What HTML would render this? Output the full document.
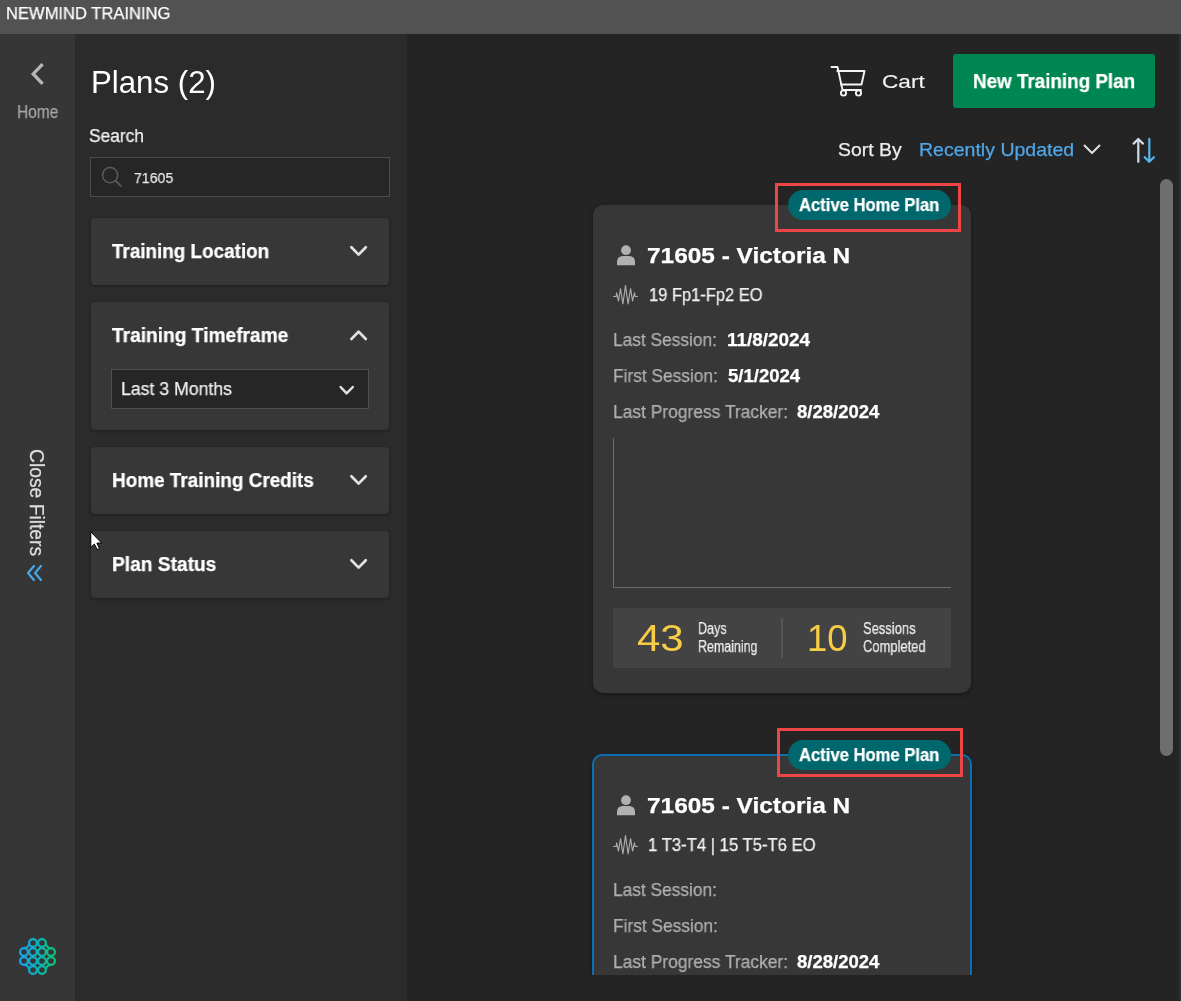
<!DOCTYPE html>
<html><head><meta charset="utf-8"><style>*{margin:0;padding:0;box-sizing:border-box}
html,body{width:1181px;height:1001px;overflow:hidden;background:#242424;font-family:"Liberation Sans",sans-serif;color:#fff}
.a{position:absolute}
.t{position:absolute;white-space:nowrap;line-height:1;will-change:transform;-webkit-text-stroke:.25px currentColor}
.acc{position:absolute;left:91px;width:298px;background:#373737;border-radius:4px;box-shadow:0 1px 3px rgba(0,0,0,.35)}
.card{position:absolute;background:#373737;border-radius:10px;box-shadow:0 2px 5px rgba(0,0,0,.35)}
</style></head><body>
<div class="a" style="left:0;top:0;width:1181px;height:34px;background:#525252"></div>
<div class="a" style="left:0;top:34px;width:75px;height:967px;background:#363636"></div>
<div class="a" style="left:75px;top:34px;width:332px;height:967px;background:#2b2b2b"></div>
<div class="t" id="title" style="left:5.62px;top:5px;font-size:17px;font-weight:400;color:#ffffff;transform:scaleX(0.9743);transform-origin:0 0;">NEWMIND TRAINING</div>
<svg class="a" style="left:28px;top:60px" width="20" height="28" viewBox="0 0 20 28"><path d="M14.6 4.2 L5.2 13.9 L14.6 23.8" fill="none" stroke="#b6b6b6" stroke-width="3.3" stroke-linecap="butt" stroke-linejoin="miter"/></svg>
<div class="t" style="left:46.3px;top:449px;font-size:19.3px;color:#dedede;transform-origin:0 0;transform:rotate(90deg)">Close Filters</div>
<svg class="a" style="left:24px;top:563px" width="22" height="20" viewBox="0 0 22 20"><path d="M10 3 L4 10 L10 17 M17 3 L11 10 L17 17" fill="none" stroke="#48a7e6" stroke-width="2.2" stroke-linecap="round" stroke-linejoin="round"/></svg>
<svg class="a" style="left:15px;top:934px" width="45" height="45" viewBox="0 0 45 45"><defs><linearGradient id="lg" x1="5" y1="22" x2="40" y2="22" gradientUnits="userSpaceOnUse"><stop offset="0" stop-color="#18a4f2"/><stop offset="0.5" stop-color="#0db3b9"/><stop offset="1" stop-color="#0cc375"/></linearGradient></defs><g fill="none" stroke="url(#lg)" stroke-width="2.2"><circle cx="18" cy="9" r="3.9"/><circle cx="27" cy="9" r="3.9"/><circle cx="9" cy="18" r="3.9"/><circle cx="18" cy="18" r="3.9"/><circle cx="27" cy="18" r="3.9"/><circle cx="36" cy="18" r="3.9"/><circle cx="9" cy="27" r="3.9"/><circle cx="18" cy="27" r="3.9"/><circle cx="27" cy="27" r="3.9"/><circle cx="36" cy="27" r="3.9"/><circle cx="18" cy="36" r="3.9"/><circle cx="27" cy="36" r="3.9"/><path d="M14.1 9 A5.1 5.1 0 0 1 9 14.1"/><path d="M30.9 9 A5.1 5.1 0 0 0 36 14.1"/><path d="M14.1 36 A5.1 5.1 0 0 0 9 30.9"/><path d="M30.9 36 A5.1 5.1 0 0 1 36 30.9"/></g></svg>
<div class="a" style="left:90px;top:157px;width:300px;height:40px;background:#262626;border:1px solid #4b4b4b"></div>
<svg class="a" style="left:100px;top:165px" width="24" height="24" viewBox="0 0 24 24"><circle cx="10.1" cy="10.2" r="7.6" fill="none" stroke="#5c5c5c" stroke-width="1.5"/><path d="M15.6 15.8 L21 21.2" stroke="#5c5c5c" stroke-width="1.7" stroke-linecap="round"/></svg>
<div class="acc" style="top:218px;height:67px"></div>
<div class="acc" style="top:302px;height:128px"></div>
<div class="a" style="left:111px;top:369px;width:258px;height:40px;background:#262626;border:1px solid #505050"></div>
<div class="acc" style="top:447px;height:67px"></div>
<div class="acc" style="top:531px;height:67px"></div>
<svg class="a" style="left:348px;top:242px" width="22" height="18" viewBox="0 0 22 18"><path d="M3.4 5.2 L10.6 12.6 L17.8 5.2" fill="none" stroke="#e2e2e2" stroke-width="2.7" stroke-linecap="round" stroke-linejoin="round"/></svg>
<svg class="a" style="left:348px;top:326px" width="22" height="18" viewBox="0 0 22 18"><path d="M3.4 13 L10.6 5.6 L17.8 13" fill="none" stroke="#e2e2e2" stroke-width="2.7" stroke-linecap="round" stroke-linejoin="round"/></svg>
<svg class="a" style="left:348px;top:471px" width="22" height="18" viewBox="0 0 22 18"><path d="M3.4 5.2 L10.6 12.6 L17.8 5.2" fill="none" stroke="#e2e2e2" stroke-width="2.7" stroke-linecap="round" stroke-linejoin="round"/></svg>
<svg class="a" style="left:348px;top:555px" width="22" height="18" viewBox="0 0 22 18"><path d="M3.4 5.2 L10.6 12.6 L17.8 5.2" fill="none" stroke="#e2e2e2" stroke-width="2.7" stroke-linecap="round" stroke-linejoin="round"/></svg>
<svg class="a" style="left:337px;top:381px" width="20" height="18" viewBox="0 0 20 18"><path d="M3.6 6 L9.6 12.4 L15.8 6" fill="none" stroke="#e2e2e2" stroke-width="2.5" stroke-linecap="round" stroke-linejoin="round"/></svg>
<div class="t" id="home" style="left:16.99px;top:103px;font-size:18px;font-weight:400;color:#a6a6a6;transform:scaleX(0.8599);transform-origin:0 0;">Home</div>
<div class="t" id="plans" style="left:90.56px;top:67px;font-size:30.5px;font-weight:400;color:#ffffff;transform:scaleX(1.0235);transform-origin:0 0;-webkit-text-stroke:0;">Plans (2)</div>
<div class="t" id="search" style="left:89.04px;top:127px;font-size:18px;font-weight:400;color:#f2f2f2;transform:scaleX(0.9636);transform-origin:0 0;">Search</div>
<div class="t" id="q" style="left:134.23px;top:170px;font-size:15.5px;font-weight:400;color:#e8e8e8;transform:scaleX(0.9118);transform-origin:0 0;">71605</div>
<div class="t" id="acc1" style="left:112.00px;top:241px;font-size:20px;font-weight:700;color:#ffffff;transform:scaleX(0.9428);transform-origin:0 0;">Training Location</div>
<div class="t" id="acc2" style="left:112.42px;top:325px;font-size:20px;font-weight:700;color:#ffffff;transform:scaleX(0.9576);transform-origin:0 0;">Training Timeframe</div>
<div class="t" id="sel" style="left:121.02px;top:380px;font-size:18px;font-weight:400;color:#efefef;transform:scaleX(0.9821);transform-origin:0 0;">Last 3 Months</div>
<div class="t" id="acc3" style="left:112.05px;top:470px;font-size:20px;font-weight:700;color:#ffffff;transform:scaleX(0.9458);transform-origin:0 0;">Home Training Credits</div>
<div class="t" id="acc4" style="left:112.04px;top:554px;font-size:20px;font-weight:700;color:#ffffff;transform:scaleX(0.9580);transform-origin:0 0;">Plan Status</div>
<svg class="a" style="left:829px;top:64px" width="38" height="34" viewBox="0 0 38 34"><g fill="none" stroke="#f4f4f4" stroke-width="1.9" stroke-linecap="round" stroke-linejoin="round"><path d="M2.5 3 H8.5 L13.5 26 H32"/><path d="M8.3 7 H35.5 L32.5 20.5 H12"/><circle cx="14.5" cy="29" r="2.6"/><circle cx="29.5" cy="29" r="2.6"/></g></svg>
<div class="a" style="left:953px;top:54px;width:202px;height:54px;background:#008751;border-radius:3px"></div>
<svg class="a" style="left:1082px;top:142px" width="20" height="16" viewBox="0 0 20 16"><path d="M2.5 3.5 L10 11 L17.5 3.5" fill="none" stroke="#e0e0e0" stroke-width="2" stroke-linecap="round" stroke-linejoin="round"/></svg>
<svg class="a" style="left:1130px;top:135px" width="28" height="32" viewBox="0 0 28 32"><g fill="none" stroke-width="2.2" stroke-linecap="round" stroke-linejoin="round"><path d="M8.3 4 V26.8 M3.6 8.6 L8.3 4 L13 8.6" stroke="#cfdee6"/><path d="M19.3 3.8 V26.8 M14.7 22.2 L19.3 26.8 L23.9 22.2" stroke="#57b6f0"/></g></svg>
<div class="a" style="left:1160px;top:179px;width:13px;height:577px;background:#6e6e6e;border-radius:6.5px"></div>
<div class="a" style="left:1179px;top:34px;width:2px;height:967px;background:#2e2e2e"></div>
<div class="t" id="cart" style="left:881.97px;top:72px;font-size:19px;font-weight:400;color:#f6f6f6;transform:scaleX(1.1914);transform-origin:0 0;-webkit-text-stroke:.1px currentColor;">Cart</div>
<div class="t" id="btn" style="left:973.06px;top:71px;font-size:20px;font-weight:700;color:#ffffff;transform:scaleX(0.9412);transform-origin:0 0;">New Training Plan</div>
<div class="t" id="sortby" style="left:838.17px;top:140px;font-size:19px;font-weight:400;color:#ededed;transform:scaleX(1.0227);transform-origin:0 0;">Sort By</div>
<div class="t" id="recent" style="left:919.18px;top:140px;font-size:19px;font-weight:400;color:#4fa7e8;transform:scaleX(1.0275);transform-origin:0 0;">Recently Updated</div>
<div class="a" style="left:407px;top:0;width:772px;height:975px;overflow:hidden"><div class="a" style="left:-407px;top:0;width:1181px;height:1001px">
<div class="card" style="left:593px;top:205px;width:378px;height:488px"></div>
<svg class="a" style="left:616px;top:245px" width="20" height="21" viewBox="0 0 20 21"><circle cx="10" cy="5.2" r="4.9" fill="#b1b1b1"/><path d="M1 20.3 V17 Q1 11 7 11 H13 Q19 11 19 17 V20.3 Z" fill="#b1b1b1"/></svg>
<svg class="a" style="left:608px;top:280px" width="36" height="30" viewBox="0 0 36 30"><path d="M5.5 16.5 H8.2 L8.6 12.8 L10.5 21 L12.5 8.7 L14.9 23.8 L17.5 5.6 L20.1 23.8 L22.6 8.7 L24.5 21 L26.5 12.8 L27.1 16.5 H29.5" fill="none" stroke="#acacac" stroke-width="1.15" stroke-linejoin="round" stroke-linecap="round"/></svg>
<div class="a" style="left:613px;top:438px;width:1px;height:150px;background:#6b6b6b"></div>
<div class="a" style="left:613px;top:587px;width:338px;height:1px;background:#6b6b6b"></div>
<div class="a" style="left:613px;top:608px;width:338px;height:60px;background:#434343"></div>
<div class="a" style="left:781px;top:618px;width:2px;height:40px;background:#555"></div>
<div class="t" id="name1" style="left:647.35px;top:246px;font-size:21.5px;font-weight:700;color:#ffffff;transform:scaleX(1.1360);transform-origin:0 0;">71605 - Victoria N</div>
<div class="t" id="ch1" style="left:648.52px;top:286px;font-size:18px;font-weight:400;color:#f2f2f2;transform:scaleX(0.9155);transform-origin:0 0;">19 Fp1-Fp2 EO</div>
<div class="t" id="lab1_1" style="left:613.04px;top:331px;font-size:18px;font-weight:400;color:#b0b0b0;transform:scaleX(0.9623);transform-origin:0 0;">Last Session:</div>
<div class="t" id="d1_1" style="left:727.16px;top:331px;font-size:18px;font-weight:700;color:#ffffff;transform:scaleX(1.0513);transform-origin:0 0;">11/8/2024</div>
<div class="t" id="lab2_1" style="left:613.04px;top:367px;font-size:18px;font-weight:400;color:#b0b0b0;transform:scaleX(0.9617);transform-origin:0 0;">First Session:</div>
<div class="t" id="d2_1" style="left:728.38px;top:367px;font-size:18px;font-weight:700;color:#ffffff;transform:scaleX(1.0301);transform-origin:0 0;">5/1/2024</div>
<div class="t" id="lab3_1" style="left:613.03px;top:403px;font-size:18px;font-weight:400;color:#b0b0b0;transform:scaleX(0.9671);transform-origin:0 0;">Last Progress Tracker:</div>
<div class="t" id="d3_1" style="left:797.38px;top:403px;font-size:18px;font-weight:700;color:#ffffff;transform:scaleX(1.0289);transform-origin:0 0;">8/28/2024</div>
<div class="t" id="n43" style="left:636.84px;top:621px;font-size:36.3px;font-weight:400;color:#f7cc46;transform:scaleX(1.1579);transform-origin:0 0;-webkit-text-stroke:0;">43</div>
<div class="t" id="days" style="left:698.33px;top:621px;font-size:16px;font-weight:400;color:#ececec;transform:scaleX(0.7860);transform-origin:0 0;">Days</div>
<div class="t" id="remain" style="left:698.33px;top:639px;font-size:16px;font-weight:400;color:#ececec;transform:scaleX(0.7773);transform-origin:0 0;">Remaining</div>
<div class="t" id="n10" style="left:806.99px;top:621px;font-size:36.3px;font-weight:400;color:#f7cc46;transform:scaleX(1.0056);transform-origin:0 0;-webkit-text-stroke:0;">10</div>
<div class="t" id="sess" style="left:863.48px;top:621px;font-size:16px;font-weight:400;color:#ececec;transform:scaleX(0.8094);transform-origin:0 0;">Sessions</div>
<div class="t" id="compl" style="left:863.48px;top:639px;font-size:16px;font-weight:400;color:#ececec;transform:scaleX(0.8091);transform-origin:0 0;">Completed</div>
<div class="card" style="left:592px;top:754px;width:380px;height:500px;border:2.5px solid #0b6fb2"></div>
<svg class="a" style="left:616px;top:795px" width="20" height="21" viewBox="0 0 20 21"><circle cx="10" cy="5.2" r="4.9" fill="#b1b1b1"/><path d="M1 20.3 V17 Q1 11 7 11 H13 Q19 11 19 17 V20.3 Z" fill="#b1b1b1"/></svg>
<svg class="a" style="left:608px;top:830px" width="36" height="30" viewBox="0 0 36 30"><path d="M5.5 16.5 H8.2 L8.6 12.8 L10.5 21 L12.5 8.7 L14.9 23.8 L17.5 5.6 L20.1 23.8 L22.6 8.7 L24.5 21 L26.5 12.8 L27.1 16.5 H29.5" fill="none" stroke="#acacac" stroke-width="1.15" stroke-linejoin="round" stroke-linecap="round"/></svg>
<div class="t" id="name2" style="left:647.35px;top:796px;font-size:21.5px;font-weight:700;color:#ffffff;transform:scaleX(1.1360);transform-origin:0 0;">71605 - Victoria N</div>
<div class="t" id="ch2" style="left:647.90px;top:836px;font-size:18px;font-weight:400;color:#f2f2f2;transform:scaleX(0.9261);transform-origin:0 0;">1 T3-T4 | 15 T5-T6 EO</div>
<div class="t" id="lab1_2" style="left:613.04px;top:881px;font-size:18px;font-weight:400;color:#b0b0b0;transform:scaleX(0.9623);transform-origin:0 0;">Last Session:</div>
<div class="t" id="lab2_2" style="left:613.04px;top:917px;font-size:18px;font-weight:400;color:#b0b0b0;transform:scaleX(0.9617);transform-origin:0 0;">First Session:</div>
<div class="t" id="lab3_2" style="left:613.03px;top:953px;font-size:18px;font-weight:400;color:#b0b0b0;transform:scaleX(0.9671);transform-origin:0 0;">Last Progress Tracker:</div>
<div class="t" id="d3_2" style="left:797.38px;top:953px;font-size:18px;font-weight:700;color:#ffffff;transform:scaleX(1.0289);transform-origin:0 0;">8/28/2024</div>
<div class="a" style="left:788px;top:190px;width:163px;height:30px;border-radius:15px;background:#00686d"></div>
<div class="a" style="left:788px;top:740px;width:163px;height:30px;border-radius:15px;background:#00686d"></div>
<div class="t" id="pill1" style="left:799.18px;top:197px;font-size:17.7px;font-weight:700;color:#ffffff;transform:scaleX(0.9396);transform-origin:0 0;">Active Home Plan</div>
<div class="t" id="pill2" style="left:799.18px;top:747px;font-size:17.7px;font-weight:700;color:#ffffff;transform:scaleX(0.9396);transform-origin:0 0;">Active Home Plan</div>
<div class="a" style="left:775px;top:183px;width:186px;height:49px;border:3px solid #ee4646"></div>
<div class="a" style="left:777px;top:728px;width:186px;height:49px;border:3px solid #ee4646"></div>
</div></div>
<svg class="a" style="left:89px;top:530px" width="16" height="22" viewBox="0 0 16 22"><path d="M1.8 1.8 L1.8 17.4 L5.3 14 L8.3 19.6 L10.5 18.6 L7.9 13.1 L12.6 13 Z" fill="#fff" stroke="#000" stroke-width="1" stroke-linejoin="round"/></svg>
</body></html>
